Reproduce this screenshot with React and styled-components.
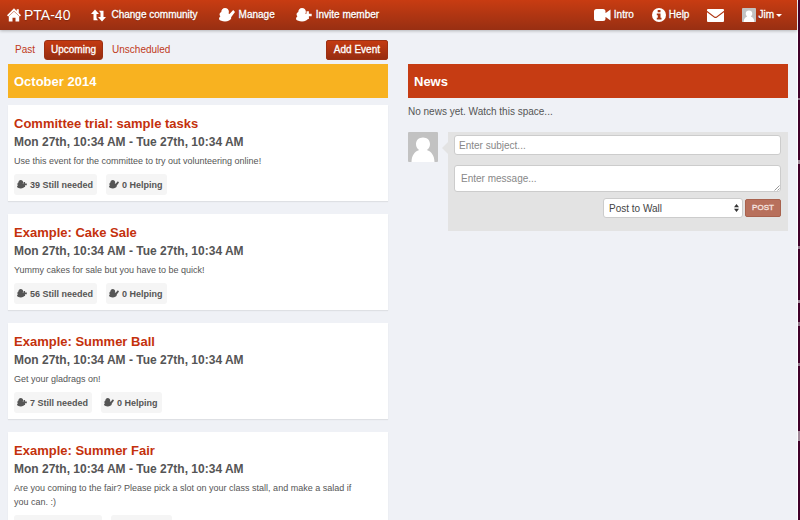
import React from "react";
import styled, { createGlobalStyle } from "styled-components";

const Global = createGlobalStyle`
  *, *::before, *::after { box-sizing: border-box; }
  body {
    margin: 0;
    background: #eff1f6;
    color: #555;
    font: 10px/14px "Liberation Sans", Arial, Helvetica, sans-serif;
    overflow: hidden;
  }
  h1, h2, h3, p, ul { margin: 0; padding: 0; font-weight: normal; }
  button, input, textarea, select { font-family: inherit; margin: 0; }
  a { text-decoration: none; color: inherit; }
`;

const Window = styled.div`
  display: grid;
  grid-template-columns: minmax(0, 1fr) 2px;
  height: 100vh;
  overflow: hidden;
`;

const Backdrop = styled.div`
  background-color: #410029;
  background-image: linear-gradient(#8f7186, #8f7186), linear-gradient(#a18a9a, #a18a9a),
    linear-gradient(#8f7186, #8f7186), linear-gradient(#a18a9a, #a18a9a),
    linear-gradient(#8f7186, #8f7186), linear-gradient(#8f7186, #8f7186),
    linear-gradient(#a18a9a, #a18a9a);
  background-repeat: no-repeat;
  background-size: 2px 2px, 2px 4px, 2px 3px, 2px 3px, 2px 4px, 2px 3px, 2px 10px;
  background-position: 0 98px, 0 160px, 0 246px, 0 300px, 0 322px, 0 363px, 0 431px;
`;

const Page = styled.div`
  border-right: 1px solid #fff;
  min-width: 0;
`;

const Navbar = styled.header`
  display: flex;
  align-items: center;
  justify-content: space-between;
  height: 30px;
  padding: 0 15px 0 7px;
  background: linear-gradient(#c83c12, #982f12);
  box-shadow: 0 1px 3px rgba(0, 0, 0, 0.25);
  color: #fff;
  text-shadow: 0 1px 1px rgba(0, 0, 0, 0.25);
`;

const NavGroup = styled.nav`
  display: flex;
  align-items: center;
  gap: ${(p) => p.$gap};
`;

const Brand = styled.a`
  display: flex;
  align-items: center;
  gap: 3px;
  font-size: 14px;
  line-height: 28px;
`;

const NavLink = styled.a`
  display: flex;
  align-items: center;
  gap: ${(p) => p.$gap || "4px"};
  font-size: 10px;
  line-height: 28px;
  -webkit-text-stroke: 0.3px #fff;
`;

const UserButton = styled.button`
  display: flex;
  align-items: center;
  gap: 2px;
  padding: 0;
  border: 0;
  background: none;
  color: #fff;
  font-size: 10px;
  line-height: 28px;
  text-shadow: inherit;
  -webkit-text-stroke: 0.3px #fff;
`;

const Caret = styled.span`
  border: 3px solid transparent;
  border-top-color: #fff;
  border-bottom: 0;
`;

const Icon = styled.svg`
  display: block;
  flex: none;
  overflow: visible;
`;

const Columns = styled.main`
  display: grid;
  grid-template-columns: minmax(0, 1fr) minmax(0, 1fr);
  gap: 20px;
  padding: 10px 9px 0 8px;
`;

const Toolbar = styled.div`
  display: flex;
  align-items: center;
  justify-content: space-between;
  height: 20px;
  margin-bottom: 4px;
`;

const Tabs = styled.nav`
  display: flex;
  gap: 2px;
`;

const Tab = styled.a`
  padding: 0 6px;
  border: 1px solid ${(p) => (p.$active ? "#9c3013" : "transparent")};
  border-radius: 3px;
  background: ${(p) => (p.$active ? "linear-gradient(#c43a12, #962d11)" : "none")};
  color: ${(p) => (p.$active ? "#fff" : "#c0391a")};
  font-size: 10px;
  line-height: 18px;
  -webkit-text-stroke: ${(p) => (p.$active ? "0.3px #fff" : "0")};
`;

const AddButton = styled.button`
  height: 20px;
  padding: 0 7px;
  border: 1px solid #9c3013;
  border-radius: 2px;
  background: linear-gradient(#c43a12, #962d11);
  color: #fff;
  font-size: 10px;
  line-height: 18px;
  -webkit-text-stroke: 0.3px #fff;
`;

const SectionTitle = styled.h2`
  height: 34px;
  padding: 0 6px;
  background: ${(p) => p.$color};
  color: #fff;
  font-size: 13px;
  font-weight: bold;
  line-height: 36px;
`;

const EventList = styled.div`
  display: grid;
  gap: 13px;
  margin-top: 7px;
`;

const EventCard = styled.article`
  padding: 10px 6px 6px;
  background: #fff;
  box-shadow: 0 1px 1px rgba(0, 0, 0, 0.07);
`;

const EventTitle = styled.h3`
  color: #c4310c;
  font-size: 13px;
  font-weight: bold;
  line-height: 18px;
`;

const EventDate = styled.p`
  font-size: 12px;
  font-weight: bold;
  line-height: 18px;
`;

const EventText = styled.p`
  margin-top: 3px;
  padding-right: 16px;
  font-size: 9px;
  line-height: 14px;
`;

const Chips = styled.div`
  display: flex;
  gap: 9px;
  margin-top: 6px;
`;

const Chip = styled.span`
  display: flex;
  align-items: center;
  gap: 3px;
  height: 21px;
  padding: 0 4px 0 3px;
  border-radius: 3px;
  background: #f5f5f5;
  font-size: 9px;
  font-weight: bold;
`;

const NewsColumn = styled.section`
  padding-top: 24px;
`;

const Empty = styled.p`
  margin: 7px 0 13px;
  font-size: 10px;
`;

const Composer = styled.div`
  display: flex;
  align-items: flex-start;
  gap: 10px;
`;

const PostForm = styled.form`
  position: relative;
  display: flex;
  flex: 1;
  flex-direction: column;
  padding: 3px 7px 13px 6px;
  min-width: 0;
  background: #e3e3e3;
  &::before {
    content: "";
    position: absolute;
    top: 10px;
    left: -6px;
    border: 6px solid transparent;
    border-right-color: #e3e3e3;
    border-left: 0;
  }
`;

const SubjectInput = styled.input`
  width: 100%;
  height: 20px;
  padding: 0 4px;
  border: 1px solid #ccc;
  border-radius: 3px;
  background: #fff;
  font-size: 10px;
  &::placeholder { color: #888; }
`;

const MessageField = styled.div`
  position: relative;
  margin: 10px 0 6px;
`;

const MessageInput = styled.textarea`
  display: block;
  width: 100%;
  height: 27px;
  padding: 6px;
  border: 1px solid #ccc;
  border-radius: 3px;
  background: #fff;
  font-size: 10px;
  line-height: 14px;
  overflow: hidden;
  resize: none;
  &::placeholder { color: #888; }
`;

const Grip = styled(Icon)`
  position: absolute;
  right: 1px;
  bottom: 1px;
  pointer-events: none;
`;

const Actions = styled.div`
  display: flex;
  justify-content: flex-end;
  align-items: center;
  gap: 2px;
`;

const SelectWrap = styled.div`
  position: relative;
  width: 140px;
`;

const WallSelect = styled.select`
  display: block;
  width: 100%;
  height: 20px;
  padding: 0 5px;
  border: 1px solid #ccc;
  border-radius: 3px;
  background: #fff;
  color: #444;
  font-size: 10px;
  appearance: none;
`;

const SelectArrows = styled(Icon)`
  position: absolute;
  top: 6px;
  right: 4px;
  pointer-events: none;
`;

const PostButton = styled.button`
  width: 36px;
  height: 18px;
  padding: 0;
  border: 1px solid #a8624e;
  border-radius: 2px;
  background: #b8705c;
  color: #f6e6e1;
  font-size: 8px;
  line-height: 16px;
  -webkit-text-stroke: 0.3px #f6e6e1;
`;

const HomeIcon = () => (
  <Icon width="14" height="14" viewBox="0 0 14 14" fill="#fff" aria-hidden="true">
    <path d="M7 .3 0 7.300l1.200 1.200L7 3l5.800 5.500L14 7.300l-2.200-2.200V1.300H9.700v1.700z" />
    <path d="M1.800 8.300 7 3.400l5.200 4.900V13.500H8.500V9.800h-3v3.700H1.800z" />
  </Icon>
);

const SwapIcon = () => (
  <Icon width="15" height="13" viewBox="0 0 15 13" fill="#fff" aria-hidden="true">
    <path d="M4 .5 8 5H5.500v4.200L7 11.300H2.500V5H0z" />
    <path d="M11 12.500 7 8h2.500V3.800L8 1.700h4.500V8H15z" />
  </Icon>
);

const PersonShape = () => (
  <path d="M6 0c2.200 0 3.900 1.600 3.900 3.700 0 1.200-.5 2.200-1.300 2.800 2 .5 3.300 1.700 3.700 3.500C11.800 12.200 9 13.500 6 13.500c-2.800 0-5-.9-6-2.200 0-1.200.5-2.200 1.400-3C.4 7.500.3 5.900 1 5c.3-.5.8-.8 1.300-1C2.200 1.700 3.800 0 6 0z" />
);

const PersonCheckIcon = ({ size = 16, color = "#fff" }) => (
  <Icon width={size} height={(size * 14) / 16} viewBox="0 0 16 14" fill={color} aria-hidden="true">
    <PersonShape />
    <path d="M8.500 4.800 10.500 6 14.200 2l1.800 2-5 6.800L6.800 7.400z" />
  </Icon>
);

const PersonPlusIcon = ({ size = 16, color = "#fff" }) => (
  <Icon width={size} height={(size * 14) / 16} viewBox="0 0 16 14" fill={color} aria-hidden="true">
    <PersonShape />
    <path d="M10.500 3.300h2.400v2.400h2.800v2.600h-2.800v2.700h-2.400V8.300H8V5.700h2.500z" />
  </Icon>
);

const VideoIcon = () => (
  <Icon width="17" height="12" viewBox="0 0 17 12" fill="#fff" aria-hidden="true">
    <path d="M2.500 0H9a2.500 2.500 0 0 1 2.500 2.500v7A2.500 2.500 0 0 1 9 12H2.500A2.500 2.500 0 0 1 0 9.500v-7A2.500 2.500 0 0 1 2.500 0zM16.500.5v11L11 7.500v-3z" />
  </Icon>
);

const InfoIcon = () => (
  <Icon width="14" height="14" viewBox="0 0 14 14" aria-hidden="true">
    <circle cx="7" cy="7" r="7" fill="#fff" />
    <path d="M5.700 2h2.800v2.200H5.700zM4.800 5.500h3.700v4.300h1v1.700H4.800V9.800h1V7.200h-1z" fill="#a93412" />
  </Icon>
);

const MailIcon = () => (
  <Icon width="17" height="13" viewBox="0 0 17 13" fill="#fff" aria-hidden="true">
    <path d="M1 0h15a1 1 0 0 1 1 1v.8L9.500 7.400a1.600 1.600 0 0 1-2 0L0 1.800V1a1 1 0 0 1 1-1z" />
    <path d="M0 3.200 7 8.500a2.600 2.600 0 0 0 3 0l7-5.300V12a1 1 0 0 1-1 1H1a1 1 0 0 1-1-1z" />
  </Icon>
);

const Avatar = ({ size, bg = "#c2c2c2" }) => (
  <Icon width={size} height={size} viewBox="0 0 30 30" role="img" aria-label="Profile picture">
    <rect width="30" height="30" rx="1" fill={bg} />
    <path d="M15 5.500c4.200 0 7 2.800 7 6.500 0 2.800-1.200 4.700-3.200 6 4.700 1.500 7.500 5.500 7.700 12H3.500c.2-6.500 3-10.500 7.700-12C9.200 16.700 8 14.800 8 12c0-3.700 2.800-6.500 7-6.500z" fill="#fff" />
  </Icon>
);

const events = [
  { title: "Committee trial: sample tasks", text: "Use this event for the committee to try out volunteering online!", needed: 39 },
  { title: "Example: Cake Sale", text: "Yummy cakes for sale but you have to be quick!", needed: 56 },
  { title: "Example: Summer Ball", text: "Get your gladrags on!", needed: 7 },
  { title: "Example: Summer Fair", text: "Are you coming to the fair? Please pick a slot on your class stall, and make a salad if you can. :)", needed: 108 },
];

export default function App() {
  return (
    <>
      <Global />
      <Window>
        <Page>
          <Navbar>
            <NavGroup $gap="21px">
              <Brand href="#home"><HomeIcon />PTA-40</Brand>
              <NavLink href="#change" $gap="5px"><SwapIcon />Change community</NavLink>
              <NavLink href="#manage"><PersonCheckIcon />Manage</NavLink>
              <NavLink href="#invite"><PersonPlusIcon />Invite member</NavLink>
            </NavGroup>
            <NavGroup $gap="18px">
              <NavLink href="#intro" $gap="3px"><VideoIcon />Intro</NavLink>
              <NavLink href="#help" $gap="3px"><InfoIcon />Help</NavLink>
              <NavLink href="#messages" aria-label="Messages"><MailIcon /></NavLink>
              <UserButton type="button"><Avatar size={14} />Jim<Caret /></UserButton>
            </NavGroup>
          </Navbar>
          <Columns>
            <section>
              <Toolbar>
                <Tabs>
                  <Tab href="#past">Past</Tab>
                  <Tab href="#upcoming" $active>Upcoming</Tab>
                  <Tab href="#unscheduled">Unscheduled</Tab>
                </Tabs>
                <AddButton type="button">Add Event</AddButton>
              </Toolbar>
              <SectionTitle $color="#f8b220">October 2014</SectionTitle>
              <EventList>
                {events.map((e) => (
                  <EventCard key={e.title}>
                    <EventTitle><a href="#event">{e.title}</a></EventTitle>
                    <EventDate>Mon 27th, 10:34 AM - Tue 27th, 10:34 AM</EventDate>
                    <EventText>{e.text}</EventText>
                    <Chips>
                      <Chip><PersonPlusIcon size={10} color="#555" />{e.needed} Still needed</Chip>
                      <Chip><PersonCheckIcon size={10} color="#555" />0 Helping</Chip>
                    </Chips>
                  </EventCard>
                ))}
              </EventList>
            </section>
            <NewsColumn>
              <SectionTitle $color="#c63c13">News</SectionTitle>
              <Empty>No news yet. Watch this space...</Empty>
              <Composer>
                <Avatar size={30} />
                <PostForm>
                  <SubjectInput aria-label="Subject" placeholder="Enter subject..." />
                  <MessageField>
                    <MessageInput aria-label="Message" placeholder="Enter message..." />
                    <Grip width="6" height="6" viewBox="0 0 6 6" aria-hidden="true">
                      <path d="M.5 5.500 5.500.5M3.500 5.500l2-2" stroke="#999" strokeWidth="1" fill="none" />
                    </Grip>
                  </MessageField>
                  <Actions>
                    <SelectWrap>
                      <WallSelect aria-label="Destination" defaultValue="wall">
                        <option value="wall">Post to Wall</option>
                      </WallSelect>
                      <SelectArrows width="5" height="8" viewBox="0 0 5 8" fill="#333" aria-hidden="true">
                        <path d="M2.500 0 5 3.200H0zM2.500 8 0 4.800h5z" />
                      </SelectArrows>
                    </SelectWrap>
                    <PostButton type="button">POST</PostButton>
                  </Actions>
                </PostForm>
              </Composer>
            </NewsColumn>
          </Columns>
        </Page>
        <Backdrop />
      </Window>
    </>
  );
}
